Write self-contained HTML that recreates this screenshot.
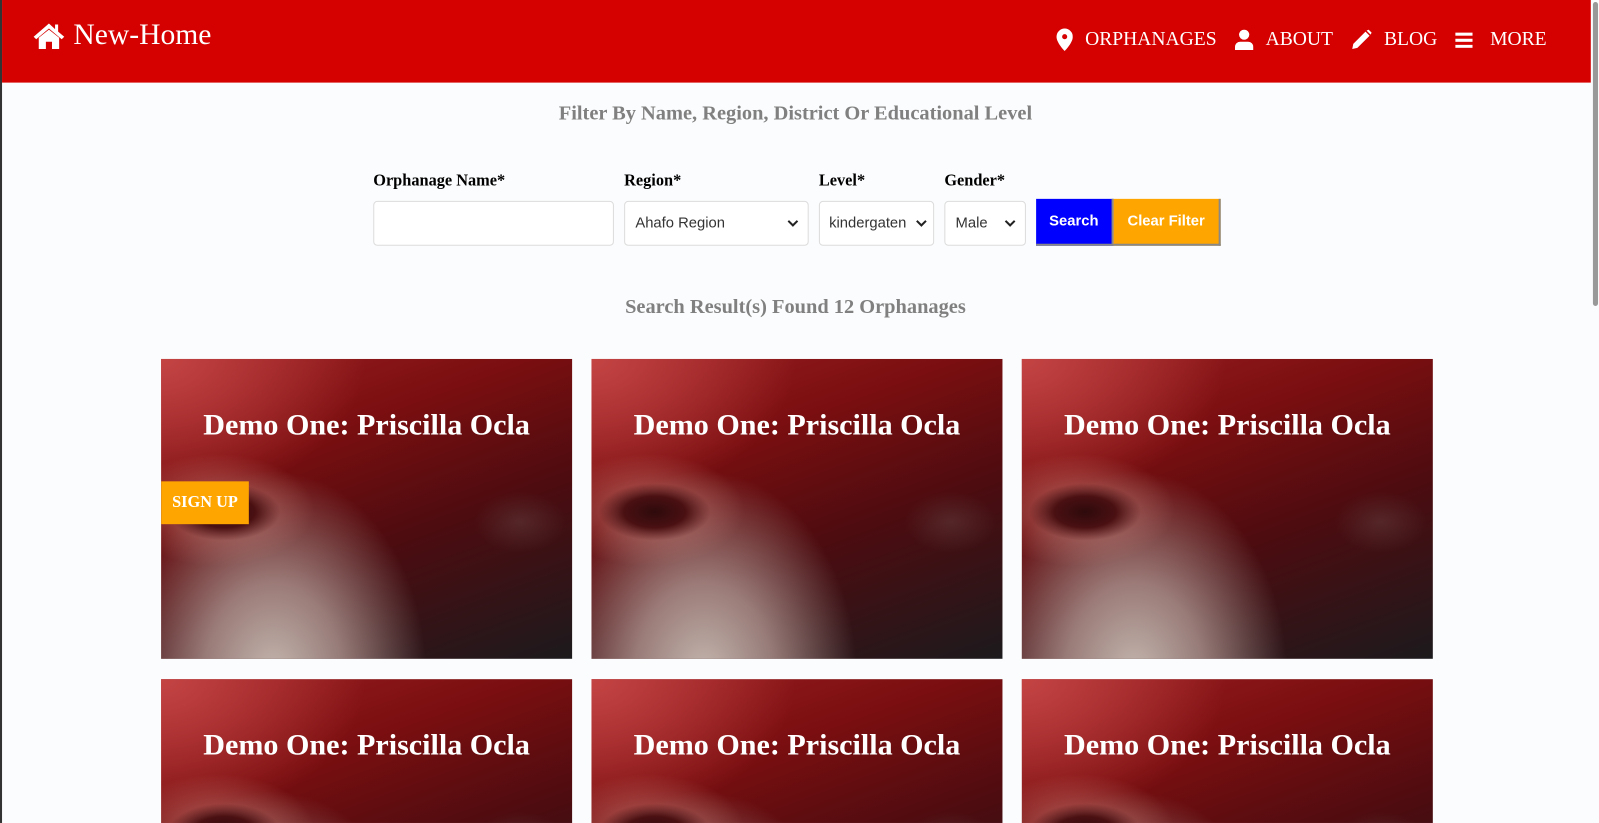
<!DOCTYPE html>
<html style="width:1599px;height:823px;overflow:hidden"><head><style>
*{box-sizing:border-box;margin:0;padding:0}
body{width:1599px;height:823px;overflow:hidden;background:#fbfcfd;font-family:"Liberation Serif",serif;position:relative}
#w{position:absolute;left:0;top:0;width:1568px;height:807px;overflow:hidden;transform:scale(1.0198);transform-origin:0 0}
.lb{position:absolute;left:0;top:0;width:2px;height:807px;background:#333}
.sb{position:absolute;left:1560px;top:0;width:8px;height:807px;background:#fbfcfd}
.sb i{position:absolute;left:2px;top:2px;width:5px;height:298px;background:#999;border-radius:3px}
.hd{position:absolute;left:2px;top:0;width:1558px;height:81px;background:#d50000;color:#fff}
.logo{position:absolute;left:30px;top:18px;font-size:29px;display:flex;align-items:center;gap:8px}
.nav{position:absolute;left:1034px;top:28px;display:flex;align-items:center;font-size:19.2px}
.nav span{display:flex;align-items:center;margin-right:18px}
.nav svg{margin-right:12px}
h2{position:absolute;width:1560px;text-align:center;color:#808080;font-size:20px;font-weight:bold}
label{position:absolute;top:169px;font-size:16px;font-weight:bold;font-family:"Liberation Serif",serif}
.f{position:absolute;top:197px;height:44px;border:1px solid #dcdcdc;border-radius:4px;background:#fff;font-family:"Liberation Sans",sans-serif;font-size:14.5px;color:#333;display:flex;align-items:center;padding-left:10px}
.f svg{position:absolute;right:9px;top:17px}
.btn{position:absolute;top:195px;height:46px;color:#fff;font-family:"Liberation Sans",sans-serif;font-weight:bold;font-size:14.5px;display:flex;align-items:center;justify-content:center;border-right:2px solid #888;border-bottom:2px solid #888}
.card{position:absolute;width:403px;height:294px;overflow:hidden;
background:
radial-gradient(ellipse 55px 28px at 62px 150px,#2e0a0c 0%,#4a1012 55%,rgba(74,16,18,0) 100%),
radial-gradient(ellipse 95px 55px at 55px 148px,rgba(205,135,125,.7),rgba(200,130,120,0) 100%),
radial-gradient(ellipse 45px 30px at 352px 160px,rgba(95,55,55,.6),rgba(60,20,20,0)),
radial-gradient(ellipse 150px 200px at 110px 310px,#c4b6ae 0%,rgba(175,150,145,.8) 45%,rgba(120,60,60,0) 100%),
radial-gradient(ellipse 200px 140px at 0px 0px,#c44444,rgba(170,40,40,0)),
linear-gradient(160deg,#9b2022 0%,#7a0e10 30%,#4c0c10 60%,#1c1a1d 100%)}
.card.b{height:141px;background-size:403px 294px}
.card h3{position:absolute;top:49px;width:100%;text-align:center;color:#fff;font-size:29.5px}
.su{position:absolute;left:0;top:120px;width:86px;height:42px;background:#ffa500;color:#fff;font-weight:bold;font-size:16px;display:flex;align-items:center;justify-content:center}
</style></head><body><div id="w">
<div class="lb"></div>
<div class="hd">
<div class="logo"><svg width="32" height="28" viewBox="0 0 32 28"><path d="M16 2L1 15l2.5 2.5L16 7l12.5 10.5L31 15l-6-5V3h-3v4.5z" fill="#fff"/><path d="M6 16v11h7v-7h6v7h7V16L16 8z" fill="#fff"/></svg>New-Home</div>
<div class="nav">
<span><svg width="16" height="22" viewBox="0 0 16 22"><path d="M8 0a8 8 0 0 0-8 8c0 6 8 14 8 14s8-8 8-14a8 8 0 0 0-8-8zm0 5.5a2.5 2.5 0 1 1 0 5 2.5 2.5 0 0 1 0-5z" fill="#fff" fill-rule="evenodd"/></svg>ORPHANAGES</span>
<span><svg width="18" height="20" viewBox="0 0 18 20"><circle cx="9" cy="5" r="5" fill="#fff"/><path d="M0 20v-3a5 5 0 0 1 5-5h8a5 5 0 0 1 5 5v3z" fill="#fff"/></svg>ABOUT</span>
<span><svg width="20" height="20" viewBox="0 0 20 20"><path d="M1 19l1-5L14 2l4 4L6 18z M15 1l2-1 3 3-1 2z" fill="#fff"/></svg>BLOG</span>
<span><svg width="17" height="16" viewBox="0 0 17 16"><rect y="1" width="17" height="3" fill="#fff"/><rect y="7" width="17" height="3" fill="#fff"/><rect y="13" width="17" height="3" fill="#fff"/></svg>&nbsp;MORE</span>
</div></div>
<h2 style="top:100px">Filter By Name, Region, District Or Educational Level</h2>
<label style="left:366px">Orphanage Name*</label>
<label style="left:612px">Region*</label>
<label style="left:803px">Level*</label>
<label style="left:926px">Gender*</label>
<div class="f" style="left:366px;width:236px"></div>
<div class="f" style="left:612px;width:181px">Ahafo Region<svg width="11" height="8" viewBox="0 0 11 8"><path d="M1 1.5l4.5 4.5 4.5-4.5" stroke="#222" stroke-width="2" fill="none"/></svg></div>
<div class="f" style="left:803px;width:113px;padding-left:9px">kindergaten<svg width="11" height="8" viewBox="0 0 11 8" style="right:6px"><path d="M1 1.5l4.5 4.5 4.5-4.5" stroke="#222" stroke-width="2" fill="none"/></svg></div>
<div class="f" style="left:926px;width:80px">Male<svg width="11" height="8" viewBox="0 0 11 8"><path d="M1 1.5l4.5 4.5 4.5-4.5" stroke="#222" stroke-width="2" fill="none"/></svg></div>
<div class="btn" style="left:1016px;width:76px;background:#0000ff">Search</div>
<div class="btn" style="left:1092px;width:105px;background:#ffa500">Clear Filter</div>
<h2 style="top:290px">Search Result(s) Found 12 Orphanages</h2>
<div class="card" style="left:158px;top:352px"><h3>Demo One: Priscilla Ocla</h3><div class="su">SIGN UP</div></div>
<div class="card" style="left:580px;top:352px"><h3>Demo One: Priscilla Ocla</h3></div>
<div class="card" style="left:1002px;top:352px"><h3>Demo One: Priscilla Ocla</h3></div>
<div class="card b" style="left:158px;top:666px"><h3>Demo One: Priscilla Ocla</h3></div>
<div class="card b" style="left:580px;top:666px"><h3>Demo One: Priscilla Ocla</h3></div>
<div class="card b" style="left:1002px;top:666px"><h3>Demo One: Priscilla Ocla</h3></div>
<div class="sb"><i></i></div>
</div></body></html>
